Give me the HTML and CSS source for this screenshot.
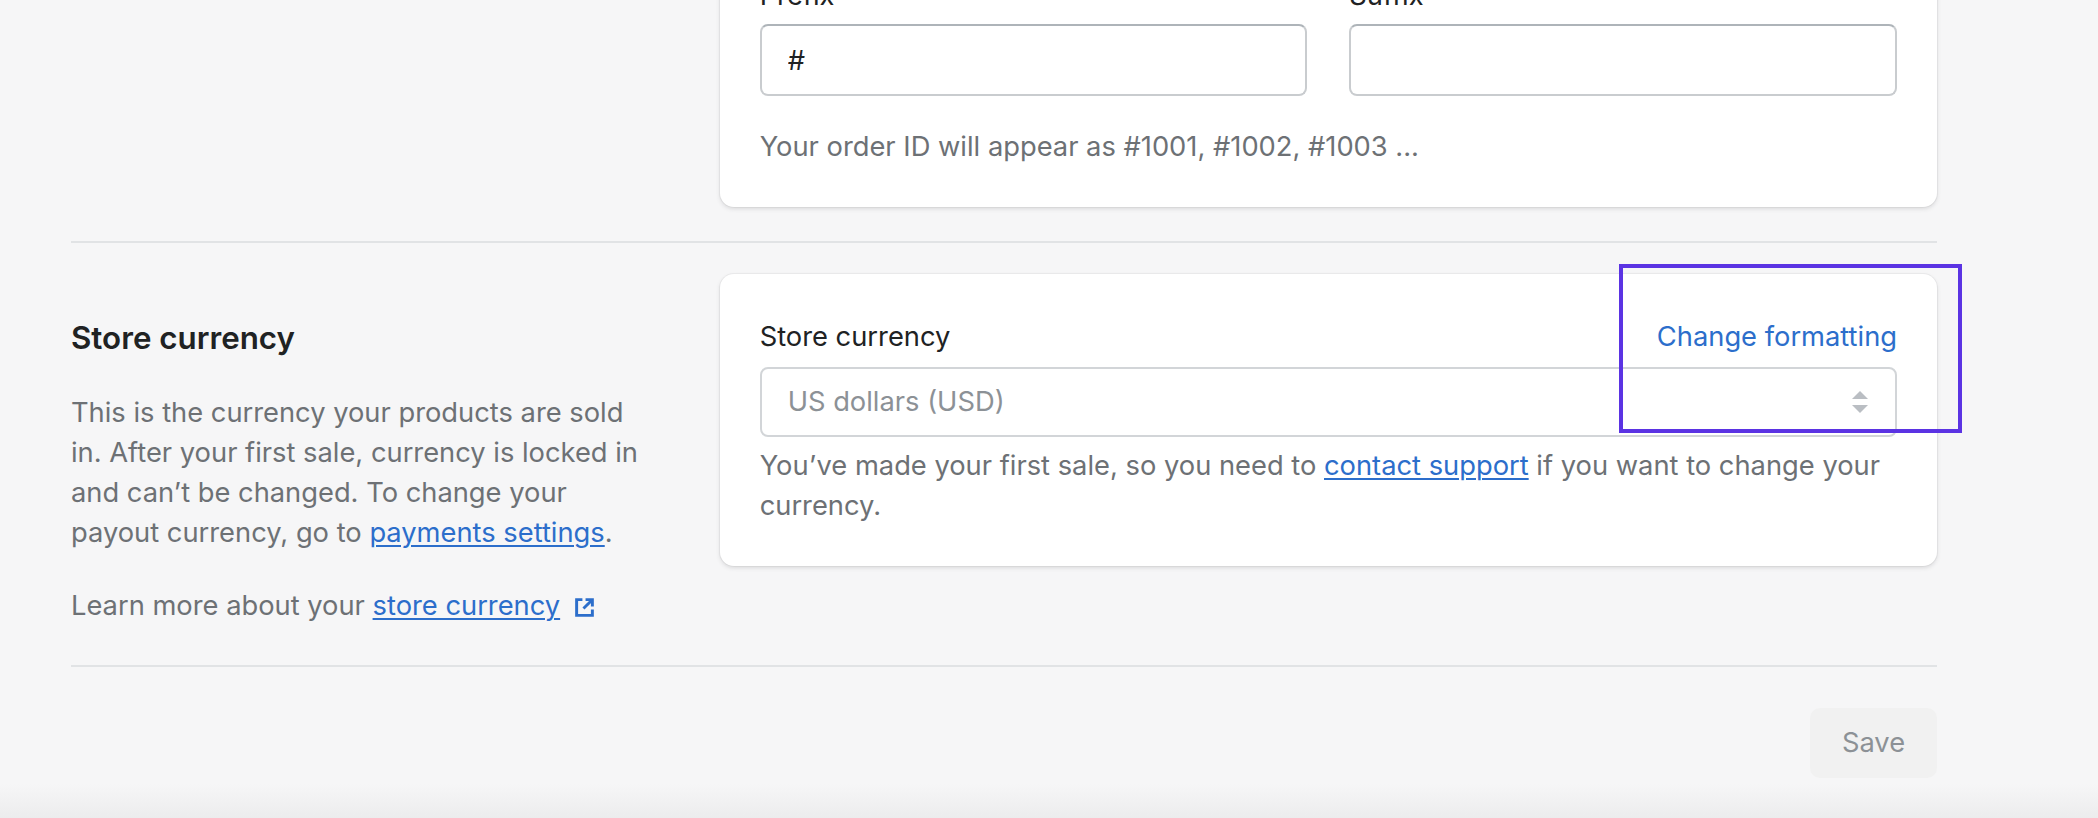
FILE: index.html
```html
<!DOCTYPE html>
<html lang="en">
<head>
    <meta charset="UTF-8">
    <meta name="viewport" content="width=device-width, initial-scale=1.0">
    <title>General settings</title>
    <link rel="stylesheet" href="styles.css">
</head>
<body>

    <div class="page">
        <!-- Order ID format -->
        <section class="section">
            <div class="annotation"></div>
            <div class="card">
                <div class="field-row">
                    <div class="field">
                        <label for="prefix" class="field-label">Prefix</label>
                        <input type="text" id="prefix" class="text-input" value="#">
                    </div>
                    <div class="field">
                        <label for="suffix" class="field-label">Suffix</label>
                        <input type="text" id="suffix" class="text-input" value="">
                    </div>
                </div>
                <p class="hint">Your order ID will appear as #1001, #1002, #1003 ...</p>
            </div>
        </section>

        <!-- Store currency -->
        <section class="section">
            <div class="annotation">
                <h2 class="annotation-title">Store currency</h2>
                <p class="annotation-text">This is the currency your products are sold in. After your first sale, currency is locked in and can’t be changed. To change your payout currency, go to <a href="#">payments settings</a>.</p>
                <p class="annotation-text learn-more">Learn more about your <a href="#">store currency</a>
                    <svg class="external-icon" viewBox="0 0 20 20" width="21" height="21">
                        <path d="M8 2.5H2.5v15h15V12" fill="none" stroke="currentColor" stroke-width="2.8"/>
                        <path d="M9 11l8.2-8.2" fill="none" stroke="currentColor" stroke-width="2.8"/>
                        <path d="M11 2.5h6.5V9" fill="none" stroke="currentColor" stroke-width="2.8"/>
                    </svg>
                </p>
            </div>
            <div class="card currency-card">
                <div class="label-row">
                    <span class="field-label">Store currency</span>
                    <a href="#" class="label-action">Change formatting</a>
                </div>
                <div class="select disabled">
                    <span>US dollars (USD)</span>
                    <svg class="select-arrows" viewBox="0 0 16 22" width="16" height="22">
                        <polygon points="0,8 8,0 16,8" fill="currentColor"/>
                        <polygon points="0,14 16,14 8,22" fill="currentColor"/>
                    </svg>
                </div>
                <p class="help">You’ve made your first sale, so you need to <a href="#">contact support</a> if you want to change your currency.</p>
                <div class="callout"></div>
            </div>
        </section>

        <div class="footer">
            <button type="button" class="save-button" disabled>Save</button>
        </div>
    </div>

</body>
</html>
```

FILE: styles.css
```css
html, body {
    margin: 0;
    padding: 0;
}

body {
    min-height: 100vh;
    background: linear-gradient(to bottom, #f6f6f7 calc(100% - 34px), #ececed 100%);
    font-family: Inter, "Noto Sans", sans-serif;
    font-size: 27.3px;
    line-height: 40px;
    color: #202223;
    overflow: hidden;
}

a {
    color: #2c6ecb;
    text-decoration: underline;
    text-underline-offset: 3px;
    text-decoration-thickness: 2px;
}

.page {
    width: 1866px;
    margin: -64px 0 0 71px;
}

.section {
    display: grid;
    grid-template-columns: 1fr 2fr;
    column-gap: 40px;
    align-items: start;
}

.section + .section {
    border-top: 2px solid #e1e3e5;
    padding-top: 31px;
}

.card {
    background-color: #ffffff;
    border-radius: 14px;
    padding: 40px;
    margin-bottom: 34px;
    box-shadow: 0 0 0 1px rgba(63, 63, 68, 0.05), 0 2px 4px rgba(63, 63, 68, 0.15);
}

.currency-card {
    position: relative;
}

/* Left column text */
.annotation {
    padding: 40px 40px 39px 0;
}

.annotation-title {
    margin: 0;
    font-size: 31.3px;
    line-height: 48px;
    font-weight: 600;
}

.annotation-text {
    margin: 31px 0 0;
    color: #6d7175;
}

.learn-more {
    margin-top: 33px;
}

.external-icon {
    color: #2c6ecb;
    vertical-align: -3px;
    margin-left: 6px;
}

/* Form fields */
.field-row {
    display: grid;
    grid-template-columns: 1fr 1fr;
    column-gap: 42px;
}

.field-label {
    display: block;
    margin-bottom: 8px;
}

.text-input {
    display: block;
    width: 100%;
    height: 72px;
    box-sizing: border-box;
    padding: 0 26px;
    font: inherit;
    color: #202223;
    background: #ffffff;
    border: 2px solid #c9cccf;
    border-top-color: #aeb4b9;
    border-radius: 8px;
}

.hint {
    margin: 31px 0 0;
    color: #6d7175;
}

.label-row {
    display: flex;
    justify-content: space-between;
    padding-top: 3px;
    margin-bottom: 10px;
}

.label-row .field-label {
    margin-bottom: 0;
}

.label-action {
    text-decoration: none;
}

.select {
    display: flex;
    align-items: center;
    justify-content: space-between;
    height: 70px;
    box-sizing: border-box;
    padding: 0 27px 0 26px;
    border: 2px solid #d2d5d8;
    border-radius: 8px;
}

.select.disabled {
    color: #8c9196;
}

.select-arrows {
    color: #babec3;
}

.help {
    margin: 9px 0 0;
    color: #6d7175;
}

/* Highlight around the formatting action */
.callout {
    position: absolute;
    top: -10px;
    right: -25px;
    width: 343px;
    height: 169px;
    box-sizing: border-box;
    border: 4px solid #5b33e3;
    pointer-events: none;
}

.footer {
    border-top: 2px solid #e1e3e5;
    padding-top: 41px;
    display: flex;
    justify-content: flex-end;
}

.save-button {
    width: 127px;
    height: 70px;
    font: inherit;
    color: #8c9196;
    background-color: #f1f1f1;
    border: none;
    border-radius: 10px;
}
```
